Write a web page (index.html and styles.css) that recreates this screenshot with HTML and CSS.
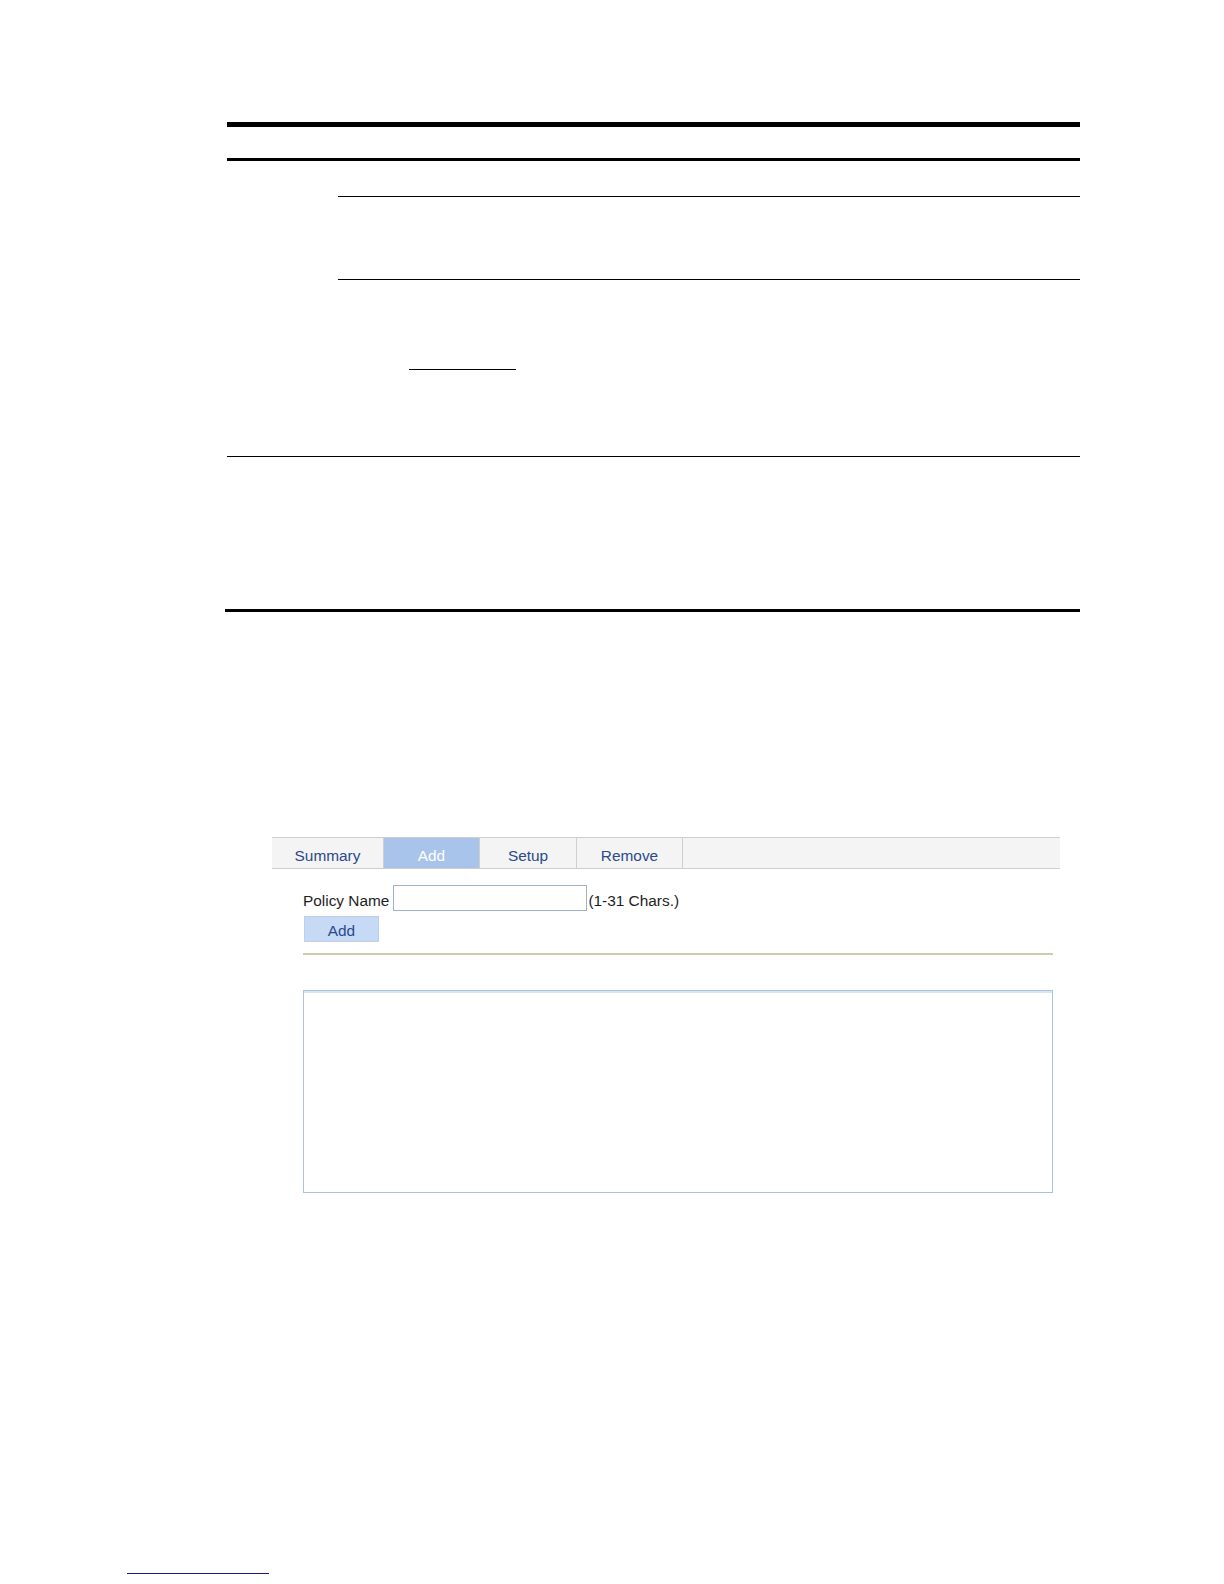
FILE: index.html
```html
<!DOCTYPE html>
<html lang="en">
<head>
<meta charset="utf-8">
<title>Policy</title>
<link rel="stylesheet" href="styles.css">
</head>
<body>
<div class="page">
  <div class="doc-table">
    <div class="doc-head"></div>
    <div class="doc-row doc-row-split">
      <div class="doc-cell-left"></div>
      <div class="doc-cell-right">
        <div class="sub-row sub-1"></div>
        <div class="sub-row sub-2"></div>
        <div class="sub-row sub-3"><a class="doc-link" href="#"></a></div>
      </div>
    </div>
    <div class="doc-row doc-row-last"></div>
  </div>

  <div class="ui">
    <div class="tabs">
      <div class="tab tab-summary">Summary</div>
      <div class="tab tab-add active">Add</div>
      <div class="tab tab-setup">Setup</div>
      <div class="tab tab-remove">Remove</div>
      <div class="tab-fill"></div>
    </div>
    <div class="form">
      <div class="form-row">
        <label class="label" for="pname">Policy Name</label>
        <input class="text-input" id="pname" type="text">
        <span class="hint">(1-31 Chars.)</span>
      </div>
      <button class="btn" type="button">Add</button>
      <div class="rule"></div>
      <div class="panel"></div>
    </div>
  </div>

  <div class="footer"><a class="foot-link" href="#"></a></div>
</div>
</body>
</html>
```

FILE: styles.css
```css
html, body {
  margin: 0;
  padding: 0;
  background: #ffffff;
}

.page {
  padding-top: 122px;
  font-family: "Liberation Sans", Arial, sans-serif;
}

/* document table lines */
.doc-table {
  margin: 0 0 0 227px;
  width: 853px;
  border-top: 5px solid #000;
}

.doc-head {
  height: 31px;
  border-bottom: 3px solid #000;
}

.doc-row-split {
  display: flex;
  border-bottom: 1px solid #000;
}

.doc-cell-left {
  width: 111px;
  flex: none;
}

.doc-cell-right {
  flex: 1;
}

.sub-row {
  border-bottom: 1px solid #000;
}

.sub-1 { height: 35px; }
.sub-2 { height: 82px; }

.sub-3 {
  border-bottom: none;
  height: 176px;
  padding: 89px 0 0 71px;
  box-sizing: border-box;
}

.doc-link {
  display: block;
  width: 107px;
  height: 0;
  border-bottom: 1px solid #000;
}

.doc-row-last {
  height: 152px;
  border-bottom: 3px solid #000;
  margin-left: -2px;
}

/* web UI */
.ui {
  margin: 225px 0 0 272px;
  width: 788px;
}

.tabs {
  display: flex;
  height: 30px;
  border-top: 1px solid #cfcfcf;
  border-bottom: 1px solid #cfcfcf;
  background: #f4f4f4;
}

.tab {
  display: flex;
  align-items: center;
  justify-content: center;
  padding-top: 5px;
  box-sizing: border-box;
  font-size: 15.4px;
  color: #2b4a8c;
  border-right: 1px solid #cfcfcf;
}

.tab-summary { width: 112px; }
.tab-add { width: 96px; }
.tab-setup { width: 97px; }
.tab-remove { width: 106px; }

.tab.active {
  background: #a9c4ea;
  color: #ffffff;
}

.tab-fill { flex: 1; }

.form {
  padding: 16px 7px 0 31px;
}

.form-row {
  display: flex;
  align-items: center;
  height: 26px;
}

.label {
  font-size: 15.4px;
  color: #1e1e1e;
  margin-right: 4px;
  padding-top: 5px;
}

.text-input {
  width: 194px;
  height: 26px;
  box-sizing: border-box;
  border: 1px solid #9db3cc;
  background: #fff;
  margin: 0 1px 0 0;
  padding: 0;
}

.hint {
  font-size: 15.4px;
  color: #1e1e1e;
  padding-top: 5px;
}

.btn {
  display: block;
  margin: 5px 0 0 1px;
  width: 75px;
  height: 26px;
  border: 1px solid #bcd0ee;
  background: #c6d9f5;
  color: #2b4a8c;
  font-family: "Liberation Sans", Arial, sans-serif;
  font-size: 15.4px;
  padding: 4px 0 0;
}

.rule {
  margin-top: 11px;
  height: 0;
  border-top: 2px solid #cdcdab;
}

.panel {
  margin-top: 35px;
  height: 203px;
  box-sizing: border-box;
  border: 1px solid #a9c2e2;
  box-shadow: inset 0 2px 0 #d8e4f2;
}

.footer {
  margin: 380px 0 0 127px;
}

.foot-link {
  display: block;
  width: 142px;
  height: 0;
  border-bottom: 1px solid #1a1a8c;
}
```
